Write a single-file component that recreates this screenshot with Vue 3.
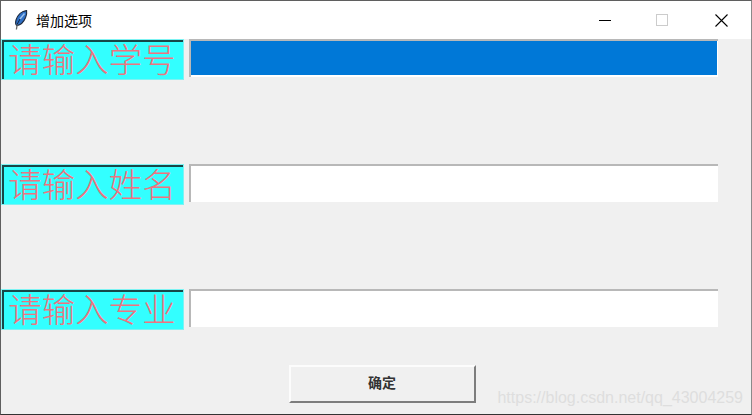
<template>
  <div class="window">
    <div class="titlebar">
      <svg class="feather" width="14" height="20" viewBox="0 0 14 20">
        <path d="M12.6 0.6 C8 1 3.6 4.5 2 10 C1.3 12.8 1.6 14.8 2.8 15.6 C6.8 15 10 11.5 11.6 7.5 C12.6 4.8 13 2.5 12.6 0.6 Z" fill="#2f6fc4" stroke="#1d2738" stroke-width="1.1" />
        <path d="M10.5 3.5 L6 9" stroke="#9cc3ee" stroke-width="1.4" fill="none" />
        <path d="M6 9 L3 14.5" stroke="#14233d" stroke-width="1" fill="none" />
        <path d="M3.2 14.5 L2.4 19.5" stroke="#666" stroke-width="1.3" fill="none" />
      </svg>
      <span class="title">增加选项</span>
      <div class="controls">
        <div class="ctl">
          <svg width="12" height="12" viewBox="0 0 12 12"><path d="M0 6.5H12" stroke="#000" stroke-width="1" /></svg>
        </div>
        <div class="ctl restore">
          <svg width="12" height="12" viewBox="0 0 12 12"><rect x="0.5" y="0.5" width="11" height="11" fill="none" stroke="#ccc" stroke-width="1" /></svg>
        </div>
        <div class="ctl">
          <svg width="13" height="13" viewBox="0 0 13 13"><path d="M0.5 0.5L12.5 12.5M12.5 0.5L0.5 12.5" stroke="#000" stroke-width="1.1" /></svg>
        </div>
      </div>
    </div>

    <div class="form">
      <div v-for="(row, i) in rows" :key="row" class="row">
        <div class="label"><span class="label-text">{{ row }}</span></div>
        <div class="entry" :class="{ focused: i === 0 }"><div class="fill"></div></div>
      </div>
    </div>

    <div class="actions">
      <button class="ok">确定</button>
    </div>

    <div class="watermark">https://blog.csdn.net/qq_43004259</div>
  </div>
</template>

<script setup>
const rows = ['请输入学号', '请输入姓名', '请输入专业'];
</script>

<style>
html, body {
  margin: 0;
  background: #f0f0f0;
}
</style>

<style scoped>
.window {
  position: relative;
  box-sizing: border-box;
  width: 752px;
  height: 415px;
  border: 1px solid #5f5f5f;
  border-right-color: #8a8a8a;
  border-bottom-color: #333;
  background: #f0f0f0;
  display: flex;
  flex-direction: column;
  overflow: hidden;
  font-family: "Noto Sans CJK SC", sans-serif;
}

.titlebar {
  height: 38px;
  background: #fff;
  display: flex;
  align-items: center;
  flex-shrink: 0;
}

.feather {
  margin-left: 13px;
}

.title {
  margin-left: 8px;
  font-size: 14px;
  color: #000;
}

.controls {
  margin-left: auto;
  display: flex;
  margin-right: 1px;
}

.ctl {
  width: 58px;
  height: 38px;
  display: flex;
  align-items: center;
  justify-content: center;
}

.restore {
  padding-right: 2px;
  box-sizing: border-box;
}

.form {
  display: flex;
  flex-direction: column;
  gap: 84px;
}

.row {
  display: flex;
  height: 41px;
}

.label {
  box-sizing: border-box;
  width: 183px;
  height: 41px;
  background: #33ffff;
  border: 1px solid #7df3f3;
  display: flex;
}

.label-text {
  flex: 1;
  display: flex;
  align-items: center;
  justify-content: center;
  border-top: 2px solid #174848;
  border-left: 2px solid #174848;
  padding: 0 3px 6px 0;
  color: #ee7480;
  font-size: 33.5px;
  font-weight: 300;
  white-space: nowrap;
}

.entry {
  box-sizing: border-box;
  margin-left: 5px;
  width: 529px;
  height: 38px;
  background: #fff;
  border-top: 2px solid #b8b8b8;
  border-left: 2px solid #b8b8b8;
  padding: 0 1px 2px 0;
}

.fill {
  height: 100%;
}

.focused .fill {
  background: #0078d7;
}

.actions {
  display: flex;
  justify-content: center;
  margin-top: 35px;
  padding-left: 12px;
}

.ok {
  box-sizing: border-box;
  width: 187px;
  height: 38px;
  padding: 0 0 4px;
  background: #f0f0f0;
  border: 2px solid;
  border-color: #fcfcfc #7d7d7d #7d7d7d #fcfcfc;
  font-family: "Noto Sans CJK SC", sans-serif;
  font-size: 14px;
  font-weight: 700;
  color: #333;
}

.watermark {
  position: absolute;
  right: 8px;
  bottom: 7px;
  font-family: "Liberation Sans", sans-serif;
  font-size: 16px;
  color: #dedede;
  white-space: nowrap;
}
</style>
